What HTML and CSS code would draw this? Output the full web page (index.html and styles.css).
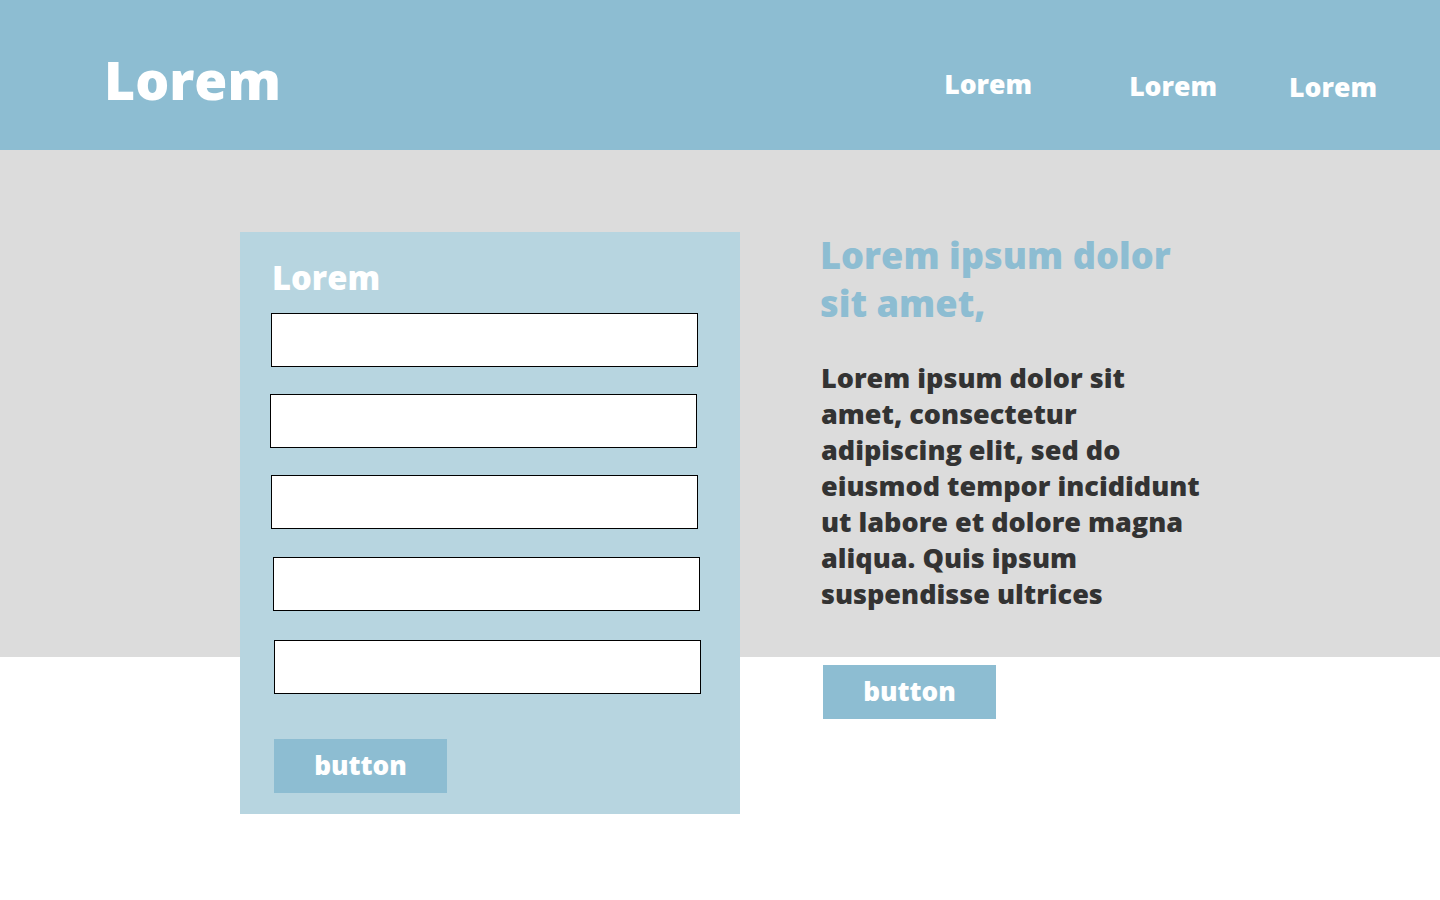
FILE: index.html
```html
<!DOCTYPE html>
<html lang="en">
<head>
<meta charset="utf-8">
<title>Lorem</title>
<link rel="stylesheet" href="styles.css">
</head>
<body>
<header class="topbar">
  <div class="logo">Lorem</div>
  <nav class="nav">
    <a class="nav-link nav-link--first" href="#">Lorem</a>
    <a class="nav-link nav-link--second" href="#">Lorem</a>
    <a class="nav-link nav-link--third" href="#">Lorem</a>
  </nav>
</header>
<main class="main">
  <form class="card">
    <h2 class="card-title">Lorem</h2>
    <div class="fields">
      <input class="field field--a" type="text">
      <input class="field field--b" type="text">
      <input class="field field--c" type="text">
      <input class="field field--d" type="text">
      <input class="field field--e" type="text">
    </div>
    <button class="btn btn--card" type="button">button</button>
  </form>
  <section class="info">
    <h1 class="info-title">Lorem ipsum dolor<br>sit amet,</h1>
    <p class="info-text">Lorem ipsum dolor sit<br>amet, consectetur<br>adipiscing elit, sed do<br>eiusmod tempor incididunt<br>ut labore et dolore magna<br>aliqua. Quis ipsum<br>suspendisse ultrices</p>
    <button class="btn btn--info" type="button">button</button>
  </section>
</main>
</body>
</html>
```

FILE: styles.css
```css
* { box-sizing: border-box; }

body {
  margin: 0;
  font-family: "Open Sans", "Liberation Sans", sans-serif;
  font-weight: 800;
  background: #ffffff;
  color: #333333;
}

.topbar {
  height: 150px;
  background: #8dbdd2;
  display: flex;
  align-items: flex-start;
  justify-content: space-between;
  padding: 0 63px 0 104px;
}

.logo {
  color: #ffffff;
  font-size: 53.5px;
  line-height: 1;
  margin-top: 53px;
}

.nav {
  display: flex;
  align-items: flex-start;
  gap: 72px;
  margin-top: 71px;
}

.nav-link {
  color: #ffffff;
  text-decoration: none;
  font-size: 26.6px;
  line-height: 1;
}
.nav-link--first { margin-right: 25px; }
.nav-link--second { margin-top: 2px; }
.nav-link--third { margin-top: 3px; }

.main {
  display: flex;
  align-items: flex-start;
  padding: 82px 0 86px 240px;
  background: linear-gradient(#dcdcdc 0, #dcdcdc 507px, #ffffff 507px);
}

.card {
  width: 500px;
  height: 582px;
  background: #b7d5e0;
  padding: 26px 0 0 30px;
  display: flex;
  flex-direction: column;
  align-items: flex-start;
}

.card-title {
  margin: 0 0 15px 2px;
  color: #ffffff;
  font-size: 32.7px;
  line-height: 40px;
  font-weight: 800;
}

.fields {
  display: flex;
  flex-direction: column;
  gap: 27px;
}

.field {
  display: block;
  width: 427px;
  height: 54px;
  margin: 0;
  border: 1px solid #000000;
  background: #ffffff;
  outline: none;
}
.field--a { margin-left: 1px; }
.field--b { margin-left: 0; }
.field--c { margin-left: 1px; }
.field--d { margin-left: 3px; margin-top: 1px; }
.field--e { margin-left: 4px; margin-top: 2px; }

.btn {
  width: 173px;
  height: 54px;
  border: 0;
  background: #8dbdd2;
  color: #ffffff;
  font-family: inherit;
  font-weight: 800;
  font-size: 26.2px;
  line-height: 1;
  padding: 0 0 2px;
  cursor: pointer;
}

.btn--card {
  margin: 45px 0 0 4px;
}

.info {
  margin-left: 81px;
  display: flex;
  flex-direction: column;
  align-items: flex-start;
}

.info-title {
  margin: -1px 0 0 -1px;
  color: #8dbdd2;
  font-size: 36.2px;
  line-height: 48px;
  font-weight: 800;
  white-space: nowrap;
}

.info-text {
  margin: 33px 0 0;
  font-size: 27px;
  line-height: 36px;
  color: #333333;
  white-space: nowrap;
}

.btn--info {
  margin: 53px 0 0 2px;
}
```
